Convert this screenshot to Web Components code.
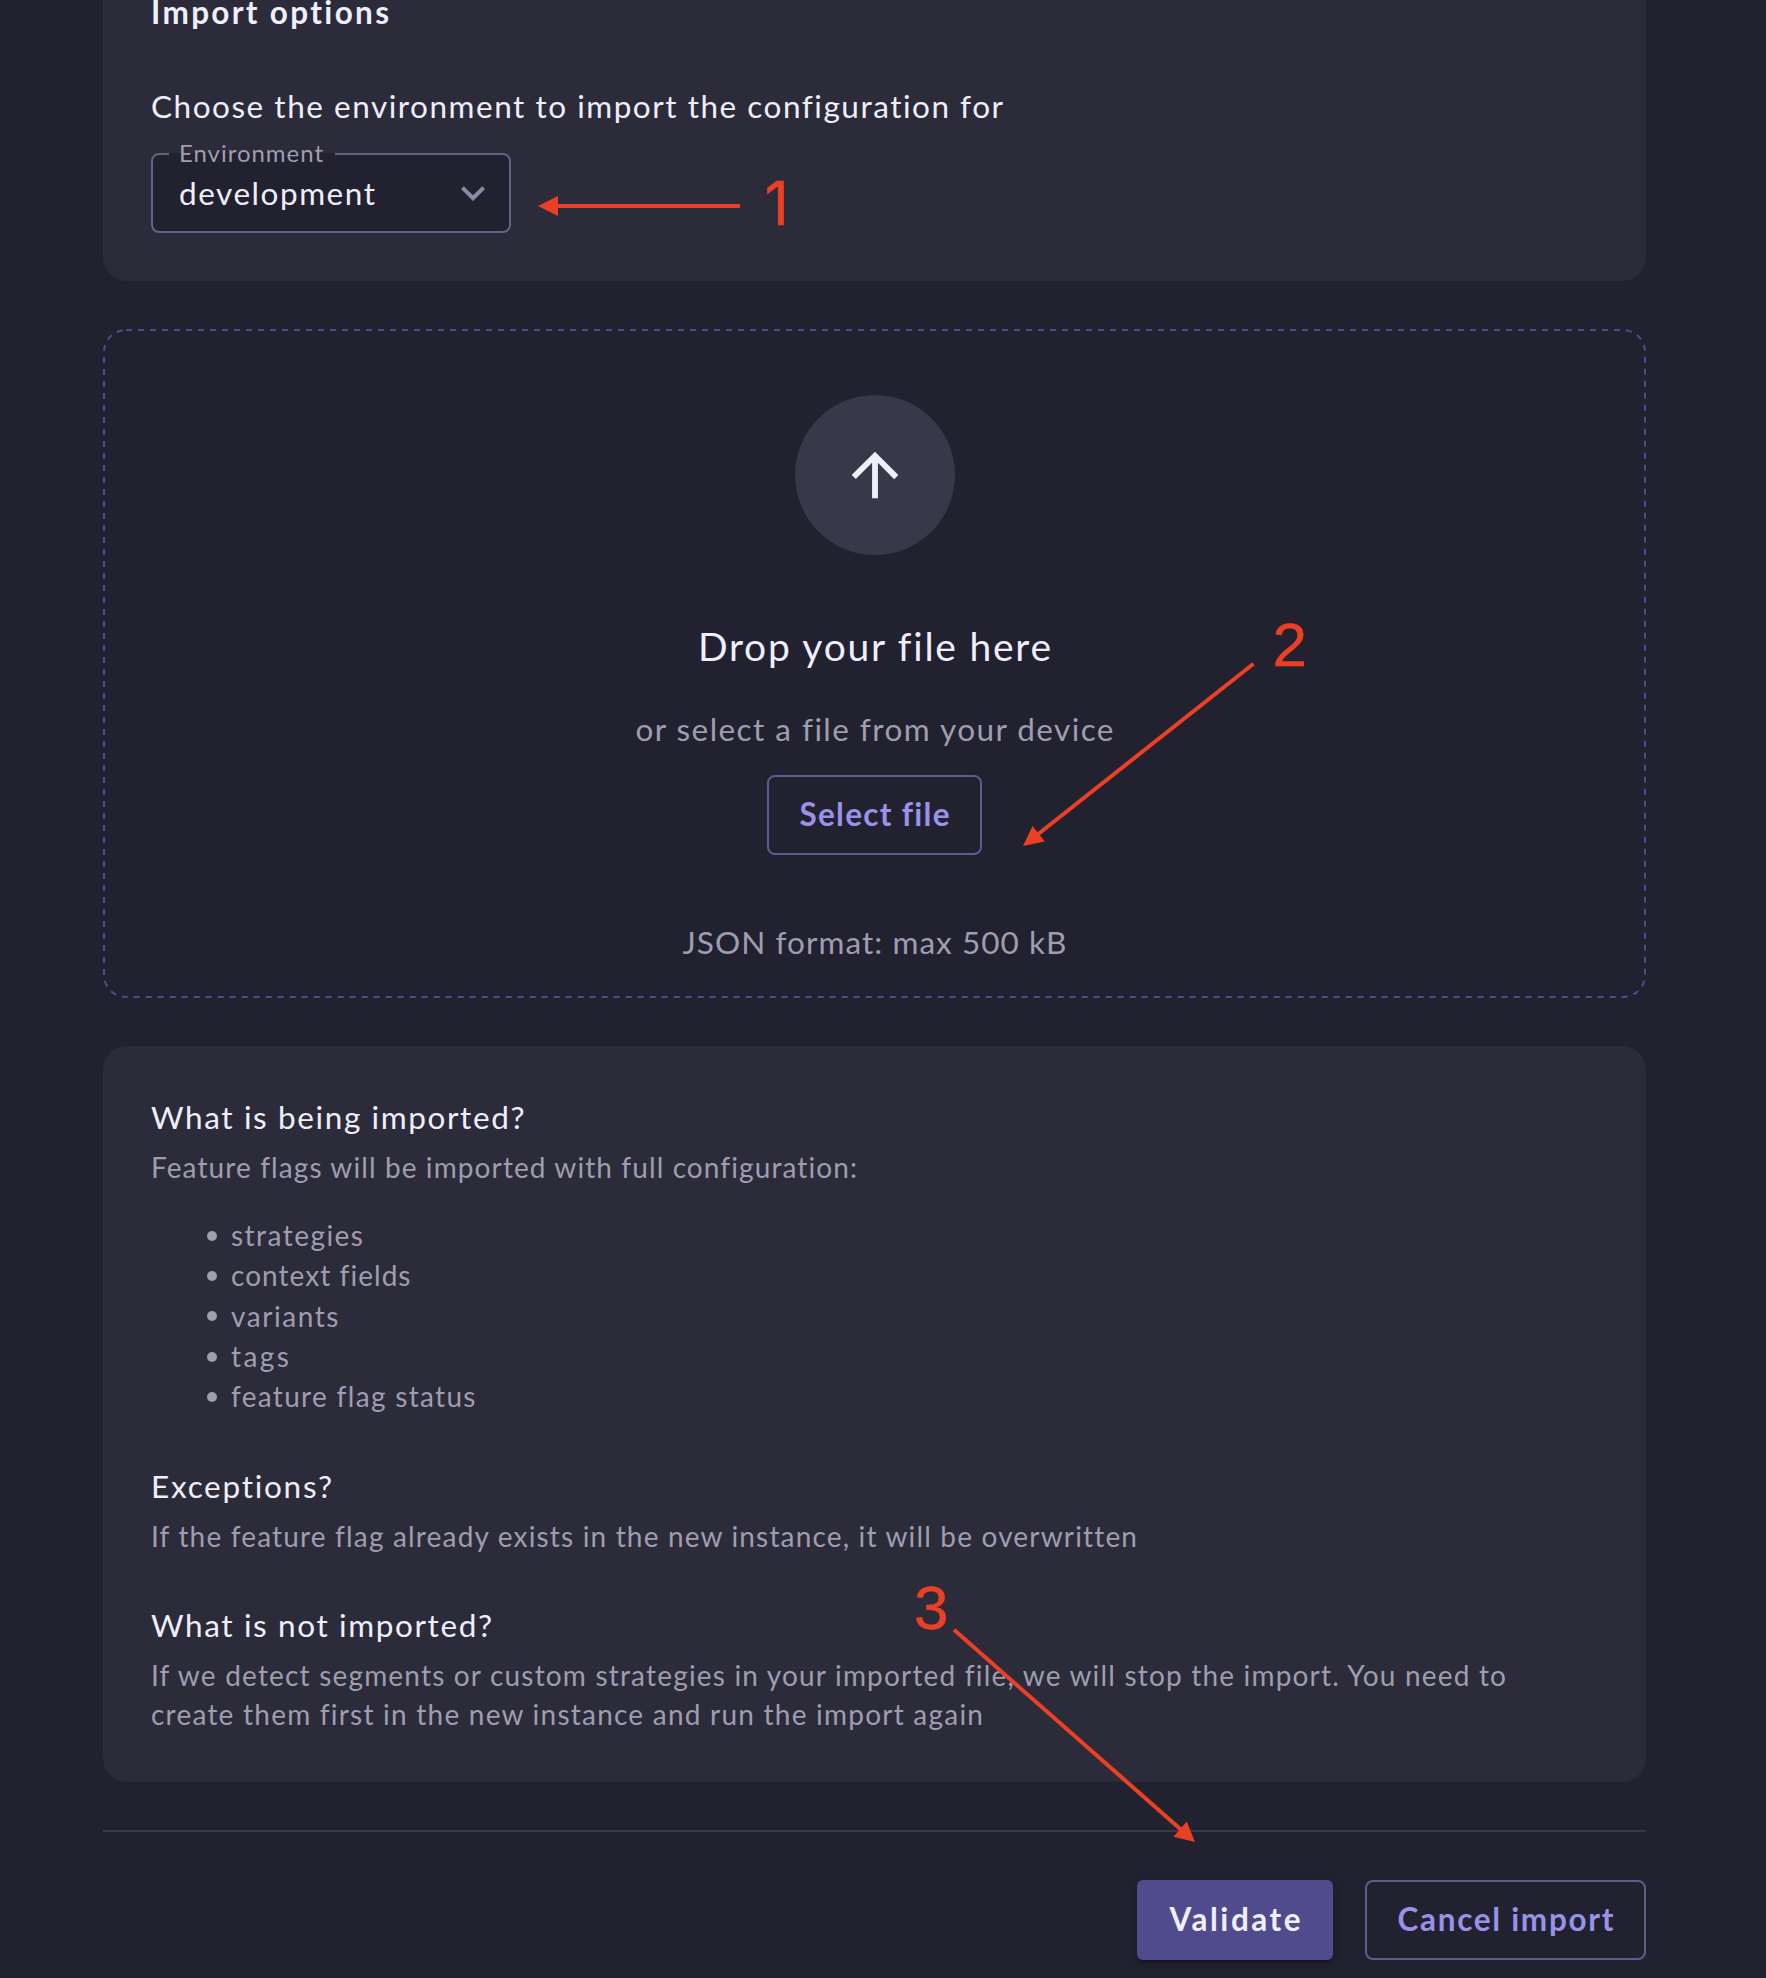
<!DOCTYPE html>
<html lang="en">
<head>
<meta charset="utf-8">
<title>Import options</title>
<style>
  html, body { margin: 0; background: #222130; }
  body { width: 1766px; height: 1978px; overflow: hidden; }
</style>
</head>
<body>
<import-page></import-page>
<script>
const define = (name, html, setup) => {
  const template = document.createElement('template');
  template.innerHTML = html;
  customElements.define(name, class extends HTMLElement {
    constructor() {
      super();
      this.attachShadow({ mode: 'open' }).append(template.content.cloneNode(true));
    }
    connectedCallback() { if (setup) setup(this, this.shadowRoot); }
  });
};

/* One line of text, tracked so that it spans the width given in "span". */
define('text-line', `
  <style>
    :host { display: block; font-size: 31.5px; line-height: 40px; color: #eeeefc; white-space: nowrap; font-variant-ligatures: none; }
    :host([kind=body]) { font-size: 28px; color: #9f9db0; }
    :host([kind=muted]) { color: #9f9db0; }
    :host([kind=title]) { font-size: 39px; line-height: 48px; }
    :host([kind=bold]) { font-weight: 700; line-height: 25px; }
    :host([kind=button]) { font-weight: 700; color: inherit; font-size: 31.5px; }
    :host([kind=label]) { font-size: 24px; line-height: 30px; color: #9f9db0; }
    span { display: inline-block; }
  </style>
  <span><slot></slot></span>`, (host, root) => {
    const span = root.querySelector('span');
    const target = Number(host.getAttribute('span'));
    if (!target) return;
    const gaps = host.textContent.trim().length - 1;
    const tracking = (target - span.getBoundingClientRect().width) / gaps;
    span.style.letterSpacing = tracking + 'px';
    span.style.marginRight = -tracking + 'px';
  });

define('info-panel', `
  <style>
    :host { display: flex; flex-direction: column; box-sizing: border-box; padding: 51px 48px 0; height: 736px; border-radius: 24px; background: #2c2b3a; }
    :host([top]) { height: 281px; padding-top: 0; border-radius: 0 0 24px 24px; }
  </style>
  <slot></slot>`);

define('select-field', `
  <style>
    :host { display: block; width: 360px; height: 80px; }
    fieldset { box-sizing: border-box; position: relative; display: flex; align-items: center; justify-content: space-between; width: 100%; height: 80px; margin: 0; padding: 0 12px 0 26px; border: 2px solid #666285; border-radius: 8px; background: #222130; }
    .label { position: absolute; left: 16px; top: -17px; padding: 0 12px 0 10px; height: 30px; background: linear-gradient(#2c2b3a 0 15px, #222130 15px); }
    svg { width: 48px; height: 48px; fill: #8c89a4; }
  </style>
  <fieldset>
    <div class="label"><text-line kind="label" span="144">Environment</text-line></div>
    <slot></slot>
    <svg viewBox="0 0 24 24"><path d="M7.41 8.59 12 13.17l4.59-4.58L18 10l-6 6-6-6z"/></svg>
  </fieldset>`);

define('action-button', `
  <style>
    :host { display: block; width: var(--w); height: 80px; }
    button { box-sizing: border-box; display: flex; align-items: center; justify-content: center; width: 100%; height: 100%; padding: 0 0 2px; border: 2px solid #5f5b90; border-radius: 8px; background: transparent; color: #9892e8; font: inherit; }
    :host([filled]) button { border: 0; background: #4f4b8c; color: #eeeefc; border-radius: 6px; box-shadow: 0 6px 2px -4px rgba(0,0,0,.2), 0 4px 4px rgba(0,0,0,.14), 0 2px 10px rgba(0,0,0,.12); }
  </style>
  <button><slot></slot></button>`);

define('drop-zone', `
  <style>
    :host { display: flex; flex-direction: column; align-items: center; box-sizing: border-box; position: relative; height: 669px; padding-top: 66px; }
    .frame { position: absolute; inset: 0; width: 1543px; height: 669px; fill: none; stroke: #4f4b8f; stroke-width: 2; stroke-dasharray: 6 6; }
    .disc { display: grid; place-items: center; width: 160px; height: 160px; border-radius: 50%; background: #393849; }
    .disc svg { width: 70px; height: 70px; fill: #eeeefc; }
    .title { margin-top: 67px; }
    .sub { margin: 39px 0 26px; }
    .hint { margin-top: 67px; }
  </style>
  <svg class="frame"><rect x="1" y="1" width="1541" height="667" rx="22"/></svg>
  <div class="disc"><svg viewBox="0 0 24 24"><path d="m4 12 1.41 1.41L11 7.83V20h2V7.83l5.58 5.59L20 12l-8-8-8 8z"/></svg></div>
  <text-line class="title" kind="title" span="353">Drop your file here</text-line>
  <text-line class="sub" kind="muted" span="478">or select a file from your device</text-line>
  <action-button style="--w:215px"><text-line kind="button" span="150">Select file</text-line></action-button>
  <text-line class="hint" kind="muted" span="384">JSON format: max 500 kB</text-line>`);

define('bullet-item', `
  <style>
    :host { display: flex; align-items: center; height: 40.3px; padding-left: 56px; gap: 14px; }
    i { width: 10px; height: 10px; border-radius: 50%; background: #9f9db0; margin-top: 1px; }
  </style>
  <i></i><slot></slot>`);

/* Arrow and step number, drawn over the form. */
define('step-marks', `
  <style>
    :host { position: absolute; left: 0; top: 0; width: 1766px; height: 1978px; pointer-events: none; }
    svg { display: block; }
    line { stroke: #eb4025; stroke-width: 4; }
    polygon, text { fill: #eb4025; stroke: none; }
    text { font: 62px "Liberation Sans", Arial, sans-serif; stroke: #eb4025; stroke-width: .5; }
    .one { font-family: Inter, sans-serif; font-size: 60px; }
  </style>
  <svg width="1766" height="1978">
    <line x1="740" y1="206" x2="556" y2="206"/><polygon points="538,206 558,196 558,216"/>
    <text class="one" x="764.5" y="225">1</text>
    <line x1="1253.5" y1="663.8" x2="1037" y2="835"/><polygon points="1023,846 1032.5,826 1044.8,841.5"/>
    <text x="1272.5" y="666">2</text>
    <line x1="954" y1="1629.7" x2="1182" y2="1830.5"/><polygon points="1195,1842 1186.7,1821.5 1173.5,1836.7"/>
    <text x="914" y="1629">3</text>
  </svg>`);

define('import-page', `
  <style>
    :host { display: block; position: relative; height: 1978px; font-family: Lato, "Open Sans", sans-serif; background: #222130; }
    main { display: flex; flex-direction: column; gap: 48px; width: 1543px; margin-left: 103px; }
    .ask { margin: 61px 0 27px; }
    .text { margin-top: 10px; }
    .list { margin-top: 28px; }
    .next { margin-top: 49.5px; }
    .second { line-height: 38px; }
    hr { width: 100%; height: 2px; margin: 0; border: 0; background: #393849; }
    footer { display: flex; justify-content: flex-end; gap: 32px; }
  </style>
  <main>
    <info-panel top>
      <text-line kind="bold" span="238">Import options</text-line>
      <text-line class="ask" span="852">Choose the environment to import the configuration for</text-line>
      <select-field><text-line span="196">development</text-line></select-field>
    </info-panel>
    <drop-zone></drop-zone>
    <info-panel>
      <text-line span="373.5">What is being imported?</text-line>
      <text-line class="text" kind="body" span="706">Feature flags will be imported with full configuration:</text-line>
      <div class="list">
        <bullet-item><text-line kind="body" span="132">strategies</text-line></bullet-item>
        <bullet-item><text-line kind="body" span="179.5">context fields</text-line></bullet-item>
        <bullet-item><text-line kind="body" span="107.5">variants</text-line></bullet-item>
        <bullet-item><text-line kind="body" span="58">tags</text-line></bullet-item>
        <bullet-item><text-line kind="body" span="244.5">feature flag status</text-line></bullet-item>
      </div>
      <text-line class="next" span="181">Exceptions?</text-line>
      <text-line class="text" kind="body" span="986">If the feature flag already exists in the new instance, it will be overwritten</text-line>
      <text-line class="next" span="341">What is not imported?</text-line>
      <text-line class="text" kind="body" span="1355">If we detect segments or custom strategies in your imported file, we will stop the import. You need to</text-line>
      <text-line class="second" kind="body" span="832">create them first in the new instance and run the import again</text-line>
    </info-panel>
    <hr>
    <footer>
      <action-button filled style="--w:196px"><text-line kind="button" span="131">Validate</text-line></action-button>
      <action-button style="--w:281px"><text-line kind="button" span="216">Cancel import</text-line></action-button>
    </footer>
  </main>
  <step-marks></step-marks>`);
</script>
</body>
</html>
